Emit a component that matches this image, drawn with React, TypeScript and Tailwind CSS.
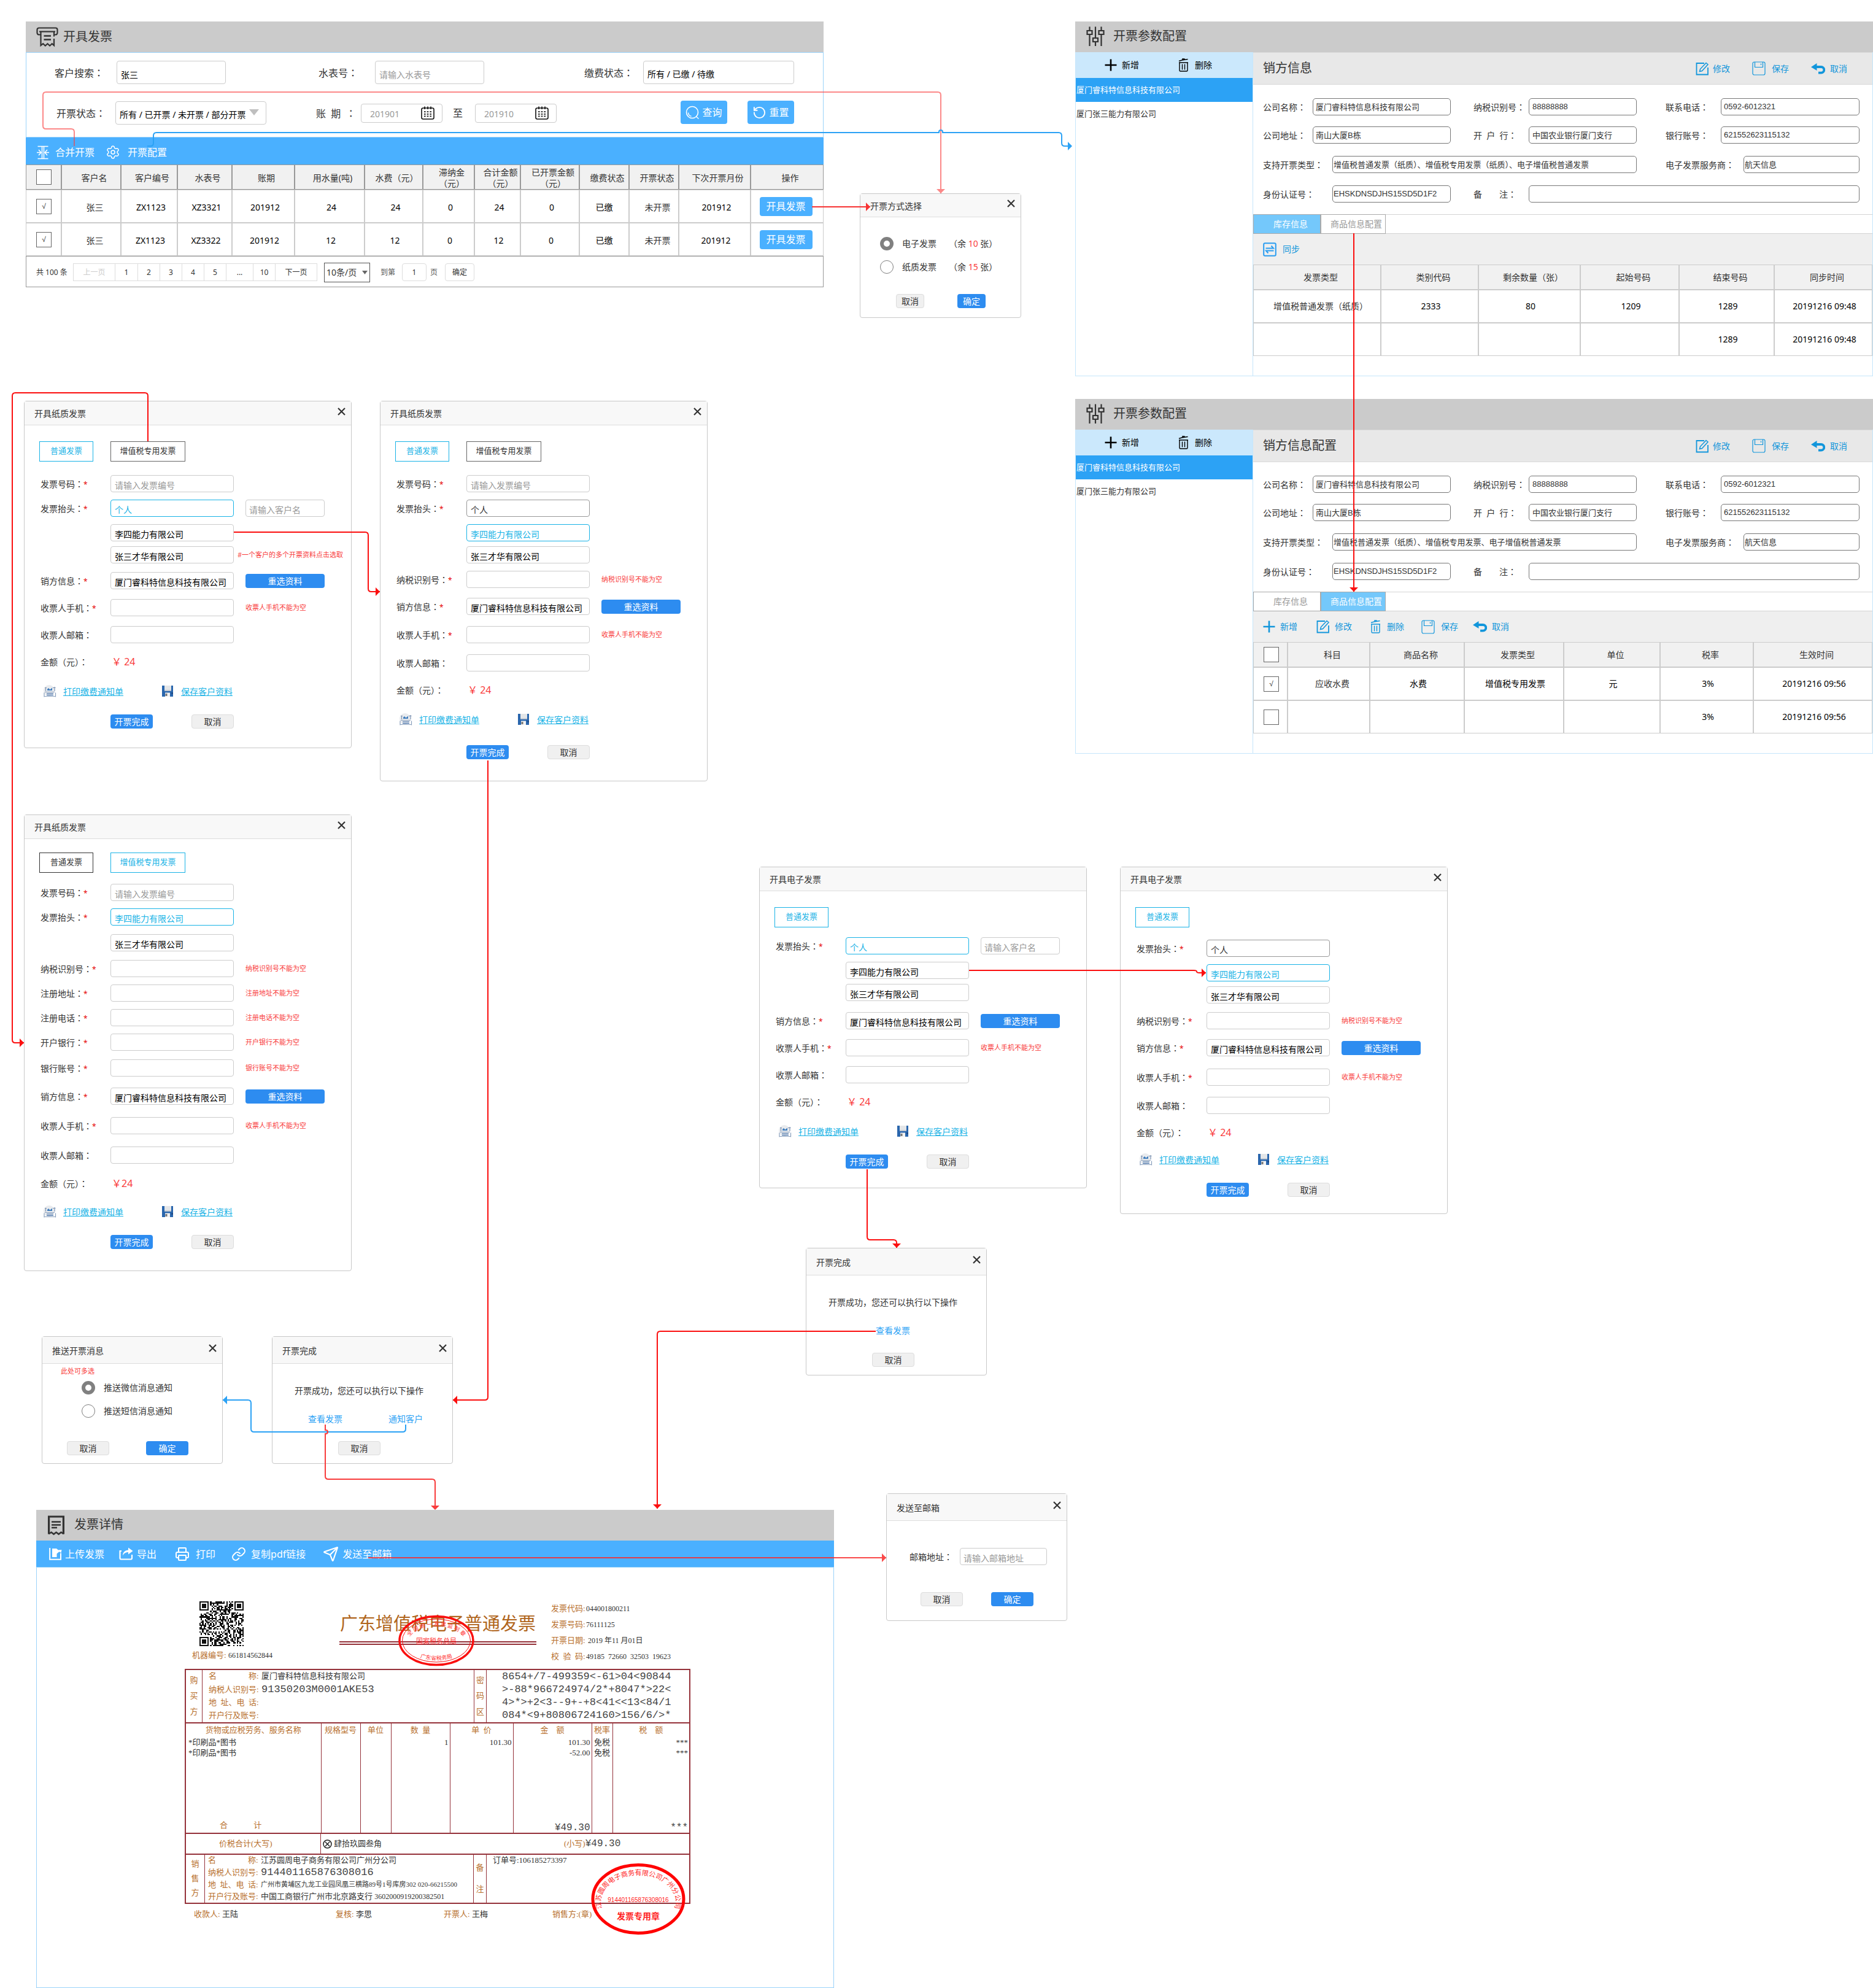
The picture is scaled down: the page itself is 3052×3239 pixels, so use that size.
import { useId } from "react";
import type { ReactNode } from "react";
import { Link, Printer, RotateCcw, Send, Settings } from "lucide-react";

/* ---------- icons ---------- */

function ReceiptPrinterIcon() {
  return (
    <svg width="36" height="33" viewBox="0 0 36 33" fill="none" stroke="#333" strokeWidth="2.2" aria-hidden="true">
      <path d="M7 12.500H4.500A3 3 0 0 1 1.500 9.500V4.500A3 3 0 0 1 4.500 1.500H31.500A3 3 0 0 1 34.500 4.500V9.500A3 3 0 0 1 31.500 12.500H29" />
      <path d="M5 7.500H31" />
      <path d="M7.500 7.500V30l3.700-2.800 3.600 3.300 3.700-3.300 3.600 3.300 3.700-3.300L29 30V19M29 15.500V7.500" />
      <path d="M12.500 14.500H24M12.500 20.500H24" strokeWidth="2.400" />
    </svg>
  );
}

function SlidersIcon() {
  return (
    <svg width="30" height="32" viewBox="0 0 30 32" fill="none" stroke="#333" strokeWidth="2.200" aria-hidden="true">
      <path d="M5.500 0.500V7M5.500 13V32M15 0.500V19M15 25V32M24.500 0.500V7M24.500 13V32" />
      <path d="M1.500 7h8v6h-8zM11 19h8v6h-8zM20.500 7h8v6h-8z" />
    </svg>
  );
}

function ReceiptIcon() {
  return (
    <svg width="27" height="33" viewBox="0 0 27 33" fill="none" stroke="#333" strokeWidth="3.200" aria-hidden="true">
      <path d="M1.600 30.500V2h23.800v28.500" />
      <path d="M1.600 30l4-2.500 4 3 4-3 4 3 4-3 4 2.500" strokeWidth="2.600" />
      <path d="M6 10.500h15M6 15.500h15M6 20h9" strokeWidth="2.600" />
    </svg>
  );
}

function MergeIcon() {
  return (
    <svg width="20" height="27" viewBox="0 0 20 27" fill="none" stroke="#fff" strokeWidth="1.500" aria-hidden="true">
      <path d="M1.500 3.500H18.500M1.500 23.500H18.500M8.500 3.500V23.500M11.500 3.500V23.500" />
      <path d="M0 13.500H6.500M3 9l4 4.500-4 4.500M20 13.500h-6.500M17 9l-4 4.500 4 4.500" />
    </svg>
  );
}

function SearchIcon() {
  return (
    <svg width="23" height="23" viewBox="0 0 23 23" fill="none" stroke="#fff" strokeWidth="1.600" aria-hidden="true">
      <circle cx="11" cy="11" r="9.500" />
      <path d="M17.500 18l4 3.500M4.500 11.500a6.500 6.500 0 0 0 5 6" strokeWidth="1.400" />
    </svg>
  );
}

function CalendarIcon() {
  return (
    <svg width="22" height="22" viewBox="0 0 22 22" fill="none" stroke="#111" strokeWidth="1.600" aria-hidden="true">
      <rect x="1" y="3" width="20" height="18" rx="2.500" />
      <path d="M6 0.500V5M11 0.500V5M16 0.500V5" />
      <path d="M5 9.200h12M5 12.800h12M5 16.400h12" strokeWidth="1.700" strokeDasharray="2.600 2.100" />
    </svg>
  );
}

function PlusIcon() {
  return (
    <svg width="20" height="20" viewBox="0 0 20 20" fill="none" stroke="currentColor" strokeWidth="2.600" aria-hidden="true">
      <path d="M10 0.500V19.500M0.500 10H19.500" />
    </svg>
  );
}

function TrashIcon() {
  return (
    <svg width="17" height="22" viewBox="0 0 17 22" fill="none" stroke="currentColor" strokeWidth="1.400" aria-hidden="true">
      <path d="M1 4.500l5-1.500 9.500-1.500M7 2.700V1h3.500" strokeWidth="1.600" />
      <path d="M2 7h13v12.500a1.500 1.500 0 0 1-1.500 1.500h-10A1.500 1.500 0 0 1 2 19.500zM6.500 9.500V18.500M10.500 9.500V18.500M1 7h15" />
    </svg>
  );
}

function EditIcon() {
  return (
    <svg width="22" height="22" viewBox="0 0 22 22" fill="none" stroke="currentColor" strokeWidth="1.800" aria-hidden="true">
      <path d="M14 2H1.500V20.500H20V9" />
      <path d="M6.500 15.500l1-4L17 1.500l3 2.500-9.500 10.500z" strokeWidth="1.500" />
    </svg>
  );
}

function SaveIcon() {
  return (
    <svg width="22" height="23" viewBox="0 0 22 23" fill="none" stroke="currentColor" strokeWidth="1.200" aria-hidden="true">
      <rect x="1" y="1" width="20" height="21" rx="2.500" />
      <path d="M4.500 1V9.500H17.500V1M14.500 3.500V6" />
    </svg>
  );
}

function UndoIcon() {
  return (
    <svg width="23" height="18" viewBox="0 0 23 18" aria-hidden="true">
      <path d="M0 6.200L9.500 0V12z" fill="currentColor" />
      <path d="M8 6h8.500a4.800 4.800 0 0 1 0 9.600H12" fill="none" stroke="currentColor" strokeWidth="3.800" />
    </svg>
  );
}

function SyncIcon() {
  return (
    <svg width="22" height="23" viewBox="0 0 22 23" fill="none" stroke="#2b9df0" strokeWidth="2" aria-hidden="true">
      <rect x="1.200" y="1.200" width="19.600" height="20.600" rx="2" />
      <path d="M4.500 9.500H17L13.500 5.500M17.500 13.500H5l3.500 4" />
    </svg>
  );
}

function UploadIcon() {
  return (
    <svg width="21" height="21" viewBox="0 0 21 21" aria-hidden="true">
      <path d="M1.200 1V19.800H19V9.500" fill="none" stroke="#fff" strokeWidth="2" />
      <path d="M5 2h7l3 2.500 5.500-.5-1 5-3-2-4 3.500V16H5z" fill="#fff" />
    </svg>
  );
}

function ExportIcon() {
  return (
    <svg width="23" height="21" viewBox="0 0 23 21" aria-hidden="true">
      <path d="M4 6H1.500V17.500a2 2 0 0 0 2 2H19a2 2 0 0 0 2-2V12" fill="none" stroke="#fff" strokeWidth="2.200" />
      <path d="M6 13.500C6 8 10 4.500 15 4.500V0.500L22.500 6 15 11.500V8C11 8 8 9.500 6 13.500z" fill="#fff" />
    </svg>
  );
}

function NoticeIcon() {
  return (
    <svg width="22" height="20" viewBox="0 0 22 20" fill="none" aria-hidden="true">
      <circle cx="10" cy="9" r="9" fill="#e9ebee" />
      <path d="M3 4.500h3M16 4.500h4.500M4.500 10V4.500M19 10V3" stroke="#7f94b3" strokeWidth="1.200" />
      <path d="M7 9V7l2-2 2.500 2.500L15 4.500V9z" fill="#3f7dbd" />
      <path d="M3 11.500h16M2 18.500h18.500M2 12.500v7M20.500 12.500v7" stroke="#8aa0bd" strokeWidth="1.200" />
      <path d="M6 14h11M6 16.500h11" stroke="#2a5c9c" strokeWidth="1.200" />
    </svg>
  );
}

function FloppyIcon() {
  return (
    <svg width="18" height="18" viewBox="0 0 18 18" aria-hidden="true">
      <path d="M0 0h18v18H0z" fill="#2a66ad" />
      <path d="M4 0h11v8H4z" fill="#e4e6e8" />
      <path d="M4 7h11v2H4z" fill="#c4cad2" />
      <path d="M5 11.500h8V18H5z" fill="#f2f2f2" />
      <path d="M5.500 13h3v4h-3z" fill="#777" />
      <path d="M15.500 11h2.500v3h-2.500z" fill="#1d4a86" />
    </svg>
  );
}

function CloseIcon() {
  return (
    <svg width="13" height="13" viewBox="0 0 13 13" fill="none" stroke="#333" strokeWidth="2.200" aria-hidden="true">
      <path d="M1 1l11 11M12 1L1 12" />
    </svg>
  );
}

/* ---------- shared pieces ---------- */

/* The Japanese face centres the full-width colon in its cell. */
function Caption({ text }: { text: string }) {
  return (
    <>
      {text.replace("：", "")}
      <span className="font-['Noto_Sans_CJK_JP',sans-serif]">：</span>
    </>
  );
}

function Dialog({
  place,
  title,
  head = "h-11",
  closable = true,
  children,
}: {
  place: string;
  title: string;
  head?: string;
  closable?: boolean;
  children: ReactNode;
}) {
  return (
    <section className={"absolute rounded-sm border border-[#c8c8c8] bg-white " + place}>
      <header
        className={
          "flex items-center justify-between border-b border-[#dddddd] bg-[#f8f8f8] pr-[9px] pl-4 " + head
        }
      >
        <h2 className="pt-0.5">{title}</h2>
        {closable && (
          <button type="button" aria-label="关闭" className="pb-1.5">
            <CloseIcon />
          </button>
        )}
      </header>
      {children}
    </section>
  );
}

function CancelButton({ size = "w-[69px] h-[23px]" }: { size?: string }) {
  return (
    <button type="button" className={"rounded-sm border border-[#dddddd] bg-[#f0f0f0] leading-5 " + size}>
      取消
    </button>
  );
}

function PrimaryButton({ children, size = "w-[69px] h-[23px]" }: { children: ReactNode; size?: string }) {
  return (
    <button type="button" className={"rounded-sm bg-[#2d8cf0] leading-5 text-white " + size}>
      {children}
    </button>
  );
}

function CheckBox({ checked = false, label }: { checked?: boolean; label: string }) {
  return (
    <label className="grid size-[25px] place-items-center">
      <input
        type="checkbox"
        defaultChecked={checked}
        aria-label={label}
        className="col-start-1 row-start-1 size-[25px] appearance-none border border-[#666666] bg-white"
      />
      {checked && (
        <span className="col-start-1 row-start-1 font-['Liberation_Sans',sans-serif] text-xs text-[#333333]">√</span>
      )}
    </label>
  );
}

function RadioOption({
  name,
  checked = false,
  children,
}: {
  name: string;
  checked?: boolean;
  children: ReactNode;
}) {
  return (
    <label className="flex h-[38px] items-center">
      <input
        type="radio"
        name={name}
        defaultChecked={checked}
        className="mr-3.5 size-[22px] appearance-none rounded-full border border-[#808080] bg-white checked:border-[6px]"
      />
      {children}
    </label>
  );
}

/* ---------- invoice issuing window ---------- */

const issueCols = [
  "w-[58px]", "w-[97px]", "w-[92px]", "w-[89px]", "w-[102px]", "w-[114px]", "w-[95px]",
  "w-[84px]", "w-[75px]", "w-[96px]", "w-[81px]", "w-[81px]", "w-[117px]", "w-[119px]",
];

const issueHeads = [
  "客户名", "客户编号", "水表号", "账期", "用水量(吨)", "水费（元）", "滞纳金（元）",
  "合计金额（元）", "已开票金额（元）", "缴费状态", "开票状态", "下次开票月份", "操作",
];

const issueRows = [
  ["张三", "ZX1123", "XZ3321", "201912", "24", "24", "0", "24", "0", "已缴", "未开票", "201912"],
  ["张三", "ZX1123", "XZ3322", "201912", "12", "12", "0", "12", "0", "已缴", "未开票", "201912"],
];

const pages = [
  { t: "上一页", c: "w-[68px] text-[#cccccc]" },
  { t: "1", c: "w-[37px]" },
  { t: "2", c: "w-9" },
  { t: "3", c: "w-9" },
  { t: "4", c: "w-9" },
  { t: "5", c: "w-9" },
  { t: "...", c: "w-11" },
  { t: "10", c: "w-9" },
  { t: "下一页", c: "w-[67px]" },
];

function MonthField({ label, value }: { label: string; value: string }) {
  return (
    <div className="flex h-[31px] w-[133px] items-center rounded-sm border border-[#cccccc] pr-3 pl-3.5">
      <input aria-label={label} defaultValue={value} className="w-full min-w-0 flex-1 pt-1 text-[#999999] outline-none" />
      <CalendarIcon />
    </div>
  );
}

function IssueWindow() {
  const id = useId();
  return (
    <section className="absolute top-[35px] left-[42px] w-[1300px]">
      <header className="flex h-[50px] items-center gap-2 bg-[#cbcbcb] pl-[17px]">
        <ReceiptPrinterIcon />
        <h1 className="text-xl">开具发票</h1>
      </header>
      <form className="h-[139px] border border-[#9bd3fa] pt-[13px] pr-[47px]">
        <div className="flex h-[38px] items-center pl-[46px]">
          <label htmlFor={id + "c"} className="w-[101px] text-base"><Caption text="客户搜索：" /></label>
          <input id={id + "c"} defaultValue="张三" className="h-[38px] w-[178px] rounded-sm border border-[#cccccc] pt-1.5 pl-1.5 text-black" />
          <label htmlFor={id + "m"} className="ml-[151px] w-[92px] text-base"><Caption text="水表号：" /></label>
          <input id={id + "m"} placeholder="请输入水表号" className="h-[38px] w-[178px] rounded-sm border border-[#cccccc] pt-1.5 pl-1.5 placeholder:text-[#999999]" />
          <label htmlFor={id + "p"} className="ml-[163px] w-24 text-base"><Caption text="缴费状态：" /></label>
          <select id={id + "p"} className="h-[38px] flex-1 appearance-none rounded-sm border border-[#cccccc] pt-1.5 pl-1.5 text-black">
            <option>所有 / 已缴 / 待缴</option>
          </select>
        </div>
        <div className="mt-[27px] flex h-10 items-center pl-[49px]">
          <label htmlFor={id + "s"} className="w-24 text-base"><Caption text="开票状态：" /></label>
          <div className="relative">
            <select id={id + "s"} className="h-[38px] w-[246px] appearance-none rounded-sm border border-[#cccccc] pt-1.5 pl-1.5 text-black">
              <option>所有 / 已开票 / 未开票 / 部分开票</option>
            </select>
            <svg width="16" height="10" viewBox="0 0 16 10" className="pointer-events-none absolute top-[13px] right-3" aria-hidden="true">
              <path d="M0 0h16L8 10z" fill="#bfbfbf" />
            </svg>
          </div>
          <span className="ml-[81px] w-[73px] text-base whitespace-pre"><Caption text="账  期  ：" /></span>
          <MonthField label="账期起" value="201901" />
          <span className="ml-[17px] w-9 text-base">至</span>
          <MonthField label="账期止" value="201910" />
          <button type="button" className="mb-0.5 ml-auto flex h-[38px] w-[76px] items-center justify-center gap-1 rounded-sm bg-[#4ab0ff] text-base text-white">
            <SearchIcon />
            查询
          </button>
          <button type="button" className="mb-0.5 ml-[33px] flex h-[38px] w-[76px] items-center justify-center gap-1 rounded-sm bg-[#4ab0ff] text-base text-white">
            <RotateCcw size={23} strokeWidth={2} />
            重置
          </button>
        </div>
      </form>
      <div className="flex h-11 items-center bg-[#4ab0ff] pt-1 pl-[18px] text-base text-white">
        <button type="button" className="flex items-center gap-2.5">
          <MergeIcon />
          合并开票
        </button>
        <button type="button" className="ml-[18px] flex items-center gap-3">
          <Settings size={24} strokeWidth={1.5} />
          开票配置
        </button>
      </div>
      <table className="w-full table-fixed border-separate border-spacing-0 text-center">
        <colgroup>
          {issueCols.map((c, i) => (
            <col key={i} className={c} />
          ))}
        </colgroup>
        <thead>
          <tr className="h-[41px] bg-[#f1f1f1]">
            <th className="border border-[#999999] pl-4">
              <CheckBox label="全选" />
            </th>
            {issueHeads.map((h) => (
              <th key={h} className="border border-[#999999] pt-0.5 pl-2.5 leading-[18px] font-normal">
                {h.length > 6 || h === "滞纳金（元）" ? (
                  <>
                    {h.replace("（元）", "")}
                    <br />
                    （元）
                  </>
                ) : (
                  h
                )}
              </th>
            ))}
          </tr>
        </thead>
        <tbody>
          {issueRows.map((row, r) => (
            <tr key={r} className="h-[54px]">
              <td className="border border-[#cccccc] pl-4">
                <CheckBox checked label={"选择第" + (r + 1) + "行"} />
              </td>
              {row.map((v, i) => (
                <td
                  key={i}
                  className={
                    "border border-[#cccccc] pt-1 " +
                    (i === 0 || i === 10 ? "pl-3" : i === 9 ? "text-black" : r === 0 ? "pl-1.5 text-black" : "pl-1 text-black")
                  }
                >
                  {v}
                </td>
              ))}
              <td className="border border-[#cccccc] pr-1">
                <button type="button" className="h-[31px] w-[86px] rounded-sm bg-[#4ab0ff] text-base text-white">
                  开具发票
                </button>
              </td>
            </tr>
          ))}
        </tbody>
      </table>
      <footer className="flex h-[51px] items-center border border-[#999999] pt-0.5 pl-4 text-xs">
        <span className="w-[60px]">共 100 条</span>
        <div className="flex h-[29px] divide-x divide-[#dddddd] border border-[#dddddd]">
          {pages.map((p) => (
            <button key={p.t} type="button" className={p.c}>
              {p.t}
            </button>
          ))}
        </div>
        <div className="relative ml-[11px]">
          <select aria-label="每页条数" className="h-8 w-[75px] appearance-none border border-[#555555] pl-[3px] text-sm">
            <option>10条/页</option>
          </select>
          <svg width="9" height="6" viewBox="0 0 9 6" className="pointer-events-none absolute top-[13px] right-1" aria-hidden="true">
            <path d="M0 0h9L4.500 6z" fill="#666" />
          </svg>
        </div>
        <label htmlFor={id + "g"} className="ml-[17px] w-[35px] text-[#555555]">到第</label>
        <input id={id + "g"} defaultValue="1" className="h-[29px] w-10 rounded-sm border border-[#dddddd] text-center" />
        <span className="ml-1.5 w-6 text-[#555555]">页</span>
        <button type="button" className="h-[29px] w-12 rounded-sm border border-[#dddddd]">确定</button>
      </footer>
    </section>
  );
}

/* ---------- configuration windows ---------- */

const stock = {
  cols: ["w-[208px]", "w-[159px]", "w-[166px]", "w-[161px]", "w-[155px]", "w-[160px]"],
  heads: ["发票类型", "类别代码", "剩余数量（张）", "起始号码", "结束号码", "同步时间"],
  rows: [
    ["增值税普通发票（纸质）", "2333", "80", "1209", "1289", "20191216 09:48"],
    ["", "", "", "", "1289", "20191216 09:48"],
  ],
};

const goods = {
  cols: ["w-14", "w-[134px]", "w-[154px]", "w-[162px]", "w-[157px]", "w-[152px]", "w-[194px]"],
  heads: ["科目", "商品名称", "发票类型", "单位", "税率", "生效时间"],
  rows: [
    ["应收水费", "水费", "增值税专用发票", "元", "3%", "20191216 09:56"],
    ["", "", "", "", "3%", "20191216 09:56"],
  ],
};

function Field({
  label,
  value = "",
  labelClass,
  inputClass,
}: {
  label: string;
  value?: string;
  labelClass: string;
  inputClass: string;
}) {
  const id = useId();
  return (
    <>
      <label htmlFor={id} className={"shrink-0 " + labelClass}><Caption text={label} /></label>
      <input
        id={id}
        defaultValue={value}
        className={
          "h-7 min-w-0 rounded-[5px] border border-[#777777] bg-transparent pb-0.5 font-['Liberation_Sans','Noto_Sans_CJK_SC',sans-serif] text-[13px] " +
          inputClass
        }
      />
    </>
  );
}

function ConfigWindow({
  place,
  heading,
  types,
  tab,
}: {
  place: string;
  heading: string;
  types: string;
  tab: "stock" | "goods";
}) {
  const isStock = tab === "stock";
  const data = isStock ? stock : goods;
  const on = "bg-[#74c8fb] text-white";
  const off = "bg-white text-[#999999]";
  return (
    <section className={"absolute right-0 left-[1752px] " + place}>
      <header className="flex h-[50px] items-center gap-[14px] bg-[#cbcbcb] pb-0.5 pl-[18px]">
        <SlidersIcon />
        <h1 className="text-xl">开票参数配置</h1>
      </header>
      <div className="flex h-[528px] border-x border-b border-[#c5e6fb]">
        <nav className="w-[289px] shrink-0 border-r border-[#c5e6fb] text-[13px]">
          <div className="flex h-[42px] items-center bg-[#cbe8fc] pl-[47px] text-sm text-black">
            <button type="button" className="flex items-center gap-2">
              <PlusIcon />
              新增
            </button>
            <button type="button" className="ml-16 flex items-center gap-2.5">
              <TrashIcon />
              删除
            </button>
          </div>
          <a href="#rk" className="flex h-[39px] items-center bg-[#2ca2f5] pl-px text-white">厦门睿科特信息科技有限公司</a>
          <a href="#zs" className="flex h-[39px] items-center pl-px">厦门张三能力有限公司</a>
        </nav>
        <div className="min-w-0 flex-1">
          <div className="flex h-[53px] items-center border-y border-[#d9d9d9] bg-[#e8e8e8] pr-[41px] pl-4">
            <h2 className="mr-auto pb-0.5 text-xl">{heading}</h2>
            <div className="flex items-center gap-9 text-[#1296db]">
              <button type="button" className="flex items-center gap-1.5"><EditIcon />修改</button>
              <button type="button" className="flex items-center gap-2.5"><SaveIcon />保存</button>
              <button type="button" className="flex items-center gap-2"><UndoIcon />取消</button>
            </div>
          </div>
          <form className="flex h-[211px] flex-col gap-[18px] pt-[22px] pr-[21px] pl-4">
            <div className="flex items-center">
              <Field label="公司名称：" value="厦门睿科特信息科技有限公司" labelClass="w-[81px]" inputClass="w-[225px] pl-1" />
              <Field label="纳税识别号：" value="88888888" labelClass="ml-[37px] w-[90px]" inputClass="w-[176px] pl-[5px]" />
              <Field label="联系电话：" value="0592-6012321" labelClass="ml-[47px] w-[90px]" inputClass="flex-1 pl-1" />
            </div>
            <div className="flex items-center">
              <Field label="公司地址：" value="南山大厦B栋" labelClass="w-[81px]" inputClass="w-[225px] pl-1" />
              <Field label="开  户  行：" value="中国农业银行厦门支行" labelClass="ml-[37px] w-[90px] whitespace-pre" inputClass="w-[176px] pl-[5px]" />
              <Field label="银行账号：" value="621552623115132" labelClass="ml-[47px] w-[90px]" inputClass="flex-1 pl-1" />
            </div>
            <div className="mt-0.5 flex items-center">
              <Field label="支持开票类型：" value={types} labelClass="w-[113px]" inputClass="w-[496px] pl-px" />
              <Field label="电子发票服务商：" value="航天信息" labelClass="ml-[47px] w-[127px]" inputClass="flex-1 pl-px" />
            </div>
            <div className="mt-0.5 flex items-center">
              <Field label="身份认证号：" value="EHSKDNSDJHS15SD5D1F2" labelClass="w-[113px]" inputClass="w-[193px] pl-px" />
              <Field label="备　　注：" labelClass="ml-[37px] w-[90px]" inputClass="flex-1 pl-1" />
            </div>
          </form>
          <div className="flex h-8 border-y border-[#d4d4d4]" role="tablist">
            <button type="button" role="tab" aria-selected={isStock} className={"-my-px w-[110px] border border-[#aaaaaa] pl-3 " + (isStock ? on : off)}>库存信息</button>
            <button type="button" role="tab" aria-selected={!isStock} className={"-my-px w-[106px] border border-[#aaaaaa] pl-2.5 " + (isStock ? off : on)}>商品信息配置</button>
          </div>
          <div className="flex h-[50px] items-center bg-[#efefef] pl-4 text-[#1296db]">
            {isStock ? (
              <button type="button" className="flex items-center gap-2.5"><SyncIcon />同步</button>
            ) : (
              <>
                <button type="button" className="flex items-center gap-2"><PlusIcon />新增</button>
                <button type="button" className="ml-[31px] flex items-center gap-2"><EditIcon />修改</button>
                <button type="button" className="ml-[30px] flex items-center gap-2.5"><TrashIcon />删除</button>
                <button type="button" className="ml-7 flex items-center gap-2.5"><SaveIcon />保存</button>
                <button type="button" className="ml-6 flex items-center gap-2"><UndoIcon />取消</button>
              </>
            )}
          </div>
          <table className="w-full table-fixed border-separate border-spacing-0 text-center">
            <colgroup>
              {data.cols.map((c, i) => (
                <col key={i} className={c} />
              ))}
            </colgroup>
            <thead>
              <tr className="h-[41px] bg-[#f1f1f1]">
                {!isStock && (
                  <th className="border border-[#cccccc] pl-4"><CheckBox label="全选" /></th>
                )}
                {data.heads.map((h) => (
                  <th key={h} className="border border-[#cccccc] pl-3 font-normal">{h}</th>
                ))}
              </tr>
            </thead>
            <tbody>
              {data.rows.map((row, r) => (
                <tr key={r} className="h-[54px]">
                  {!isStock && (
                    <td className="border border-[#cccccc] pl-4">
                      <CheckBox checked={r === 0} label={"选择第" + (r + 1) + "行"} />
                    </td>
                  )}
                  {row.map((v, i) => (
                    <td key={i} className={"border border-[#cccccc] " + (i === 0 ? "pl-3" : "pl-1 text-black")}>{v}</td>
                  ))}
                </tr>
              ))}
            </tbody>
          </table>
        </div>
      </div>
    </section>
  );
}

/* ---------- invoice form dialogs ---------- */

type FormRow = {
  label?: string;
  required?: boolean;
  gap: string;
  value?: string;
  placeholder?: string;
  tone?: "blue" | "dark";
  side?: "name" | "reselect";
  note?: string;
  noteGap?: string;
};

const SELLER = "厦门睿科特信息科技有限公司";

const plainRows: FormRow[] = [
  { label: "发票号码：", required: true, gap: "mt-[22px]", placeholder: "请输入发票编号" },
  { label: "发票抬头：", required: true, gap: "mt-3", value: "个人", tone: "blue", side: "name" },
  { gap: "mt-3", value: "李四能力有限公司" },
  { gap: "mt-2", value: "张三才华有限公司", note: "#一个客户的多个开票资料点击选取", noteGap: "ml-1.5" },
  { label: "销方信息：", required: true, gap: "mt-3.5", value: SELLER, side: "reselect" },
  { label: "收票人手机：", required: true, gap: "mt-4", note: "收票人手机不能为空" },
  { label: "收票人邮箱：", gap: "mt-4" },
];

const companyRows: FormRow[] = [
  { label: "发票号码：", required: true, gap: "mt-[22px]", placeholder: "请输入发票编号" },
  { label: "发票抬头：", required: true, gap: "mt-3", value: "个人", tone: "dark" },
  { gap: "mt-3", value: "李四能力有限公司", tone: "blue" },
  { gap: "mt-2", value: "张三才华有限公司" },
  { label: "纳税识别号：", required: true, gap: "mt-3", note: "纳税识别号不能为空" },
  { label: "销方信息：", required: true, gap: "mt-4", value: SELLER, side: "reselect" },
  { label: "收票人手机：", required: true, gap: "mt-[18px]", note: "收票人手机不能为空" },
  { label: "收票人邮箱：", gap: "mt-[18px]" },
];

const specialRows: FormRow[] = [
  { label: "发票号码：", required: true, gap: "mt-[18px]", placeholder: "请输入发票编号" },
  { label: "发票抬头：", required: true, gap: "mt-3", value: "李四能力有限公司", tone: "blue" },
  { gap: "mt-3.5", value: "张三才华有限公司" },
  { label: "纳税识别号：", required: true, gap: "mt-3.5", note: "纳税识别号不能为空" },
  { label: "注册地址：", required: true, gap: "mt-3", note: "注册地址不能为空" },
  { label: "注册电话：", required: true, gap: "mt-3", note: "注册电话不能为空" },
  { label: "开户银行：", required: true, gap: "mt-3", note: "开户银行不能为空" },
  { label: "银行账号：", required: true, gap: "mt-3.5", note: "银行账号不能为空" },
  { label: "销方信息：", required: true, gap: "mt-[18px]", value: SELLER, side: "reselect" },
  { label: "收票人手机：", required: true, gap: "mt-5", note: "收票人手机不能为空" },
  { label: "收票人邮箱：", gap: "mt-5" },
];

const electronicRows: FormRow[] = [
  { label: "发票抬头：", required: true, gap: "mt-4", value: "个人", tone: "blue", side: "name" },
  { gap: "mt-3", value: "李四能力有限公司" },
  { gap: "mt-2", value: "张三才华有限公司" },
  { label: "销方信息：", required: true, gap: "mt-[18px]", value: SELLER, side: "reselect" },
  { label: "收票人手机：", required: true, gap: "mt-4", note: "收票人手机不能为空" },
  { label: "收票人邮箱：", gap: "mt-4" },
];

const electronicCompanyRows: FormRow[] = [
  { label: "发票抬头：", required: true, gap: "mt-5", value: "个人", tone: "dark" },
  { gap: "mt-3", value: "李四能力有限公司", tone: "blue" },
  { gap: "mt-2", value: "张三才华有限公司" },
  { label: "纳税识别号：", required: true, gap: "mt-3.5", note: "纳税识别号不能为空" },
  { label: "销方信息：", required: true, gap: "mt-4", value: SELLER, side: "reselect" },
  { label: "收票人手机：", required: true, gap: "mt-5", note: "收票人手机不能为空" },
  { label: "收票人邮箱：", gap: "mt-[18px]" },
];

function FormLine({ row }: { row: FormRow }) {
  const id = useId();
  const tone =
    row.tone === "blue"
      ? "border-[#19b3e6] text-[#19b3e6]"
      : row.tone === "dark"
        ? "border-[#999999] text-[#333333]"
        : "border-[#cccccc] text-black";
  return (
    <div className={"flex h-7 items-center " + row.gap}>
      <label htmlFor={id} className="w-[114px] shrink-0">
        {row.label && <Caption text={row.label} />}
        {row.required && <span className="text-xs text-[#e60000]">*</span>}
      </label>
      <input
        id={id}
        aria-label={row.label ? undefined : "开票资料"}
        defaultValue={row.value}
        placeholder={row.placeholder}
        className={"h-7 w-[201px] rounded-sm border pt-1 pl-1.5 placeholder:text-[#999999] " + tone}
      />
      {row.side === "name" && (
        <input
          aria-label="客户名"
          placeholder="请输入客户名"
          className="ml-[19px] h-7 w-[129px] rounded-sm border border-[#cccccc] pt-1 pl-[5px] placeholder:text-[#999999]"
        />
      )}
      {row.side === "reselect" && (
        <button type="button" className="ml-[19px] h-[23px] w-[129px] rounded-sm bg-[#2d8cf0] pt-0.5 leading-5 text-white">
          重选资料
        </button>
      )}
      {row.note && (
        <span className={"text-[11px] text-[#f93b3b] " + (row.noteGap ?? "ml-[19px]")}>{row.note}</span>
      )}
    </div>
  );
}

function InvoiceFormDialog({
  place,
  title,
  closable,
  rows,
  tabs,
  tabGap = "mt-[26px]",
  amount = "￥ 24",
  amountGap = "mt-4",
  linkGap = "mt-6",
  buttonGap = "mt-7",
}: {
  place: string;
  title: string;
  closable?: boolean;
  rows: FormRow[];
  tabs: "plain" | "special" | "single";
  tabGap?: string;
  amount?: string;
  amountGap?: string;
  linkGap?: string;
  buttonGap?: string;
}) {
  const active = "border-[#19b3e6] text-[#19b3e6]";
  return (
    <Dialog place={"w-[534px] " + place} title={title} head="h-[39px]" closable={closable}>
      <form className="pl-[26px]">
        <div className={"-ml-0.5 flex gap-7 text-[13px] " + tabGap}>
          <button type="button" className={"h-[33px] w-[88px] border pb-0.5 " + (tabs === "special" ? "border-[#333333]" : active)}>
            普通发票
          </button>
          {tabs !== "single" && (
            <button type="button" className={"h-[33px] w-[122px] border pb-0.5 " + (tabs === "special" ? active : "border-[#666666]")}>
              增值税专用发票
            </button>
          )}
        </div>
        {rows.map((row, i) => (
          <FormLine key={i} row={row} />
        ))}
        <div className={"flex h-7 items-center " + amountGap}>
          <span className="w-[114px]"><Caption text="金额（元）：" /></span>
          <span className="pl-0.5 text-base text-[#f93b3b]">{amount}</span>
        </div>
        <div className={"flex h-5 items-center pl-1 text-[#19b3e6] underline " + linkGap}>
          <NoticeIcon />
          <a href="#print" className="mt-0.5 ml-[11px]">打印缴费通知单</a>
          <span className="ml-[63px]"><FloppyIcon /></span>
          <a href="#save" className="mt-0.5 ml-[13px]">保存客户资料</a>
        </div>
        <div className={"flex gap-[63px] pl-[114px] " + buttonGap}>
          <PrimaryButton>开票完成</PrimaryButton>
          <CancelButton />
        </div>
      </form>
    </Dialog>
  );
}

/* ---------- invoice detail window ---------- */

function qrPath() {
  const n = 33;
  let d = "";
  let seed = 20191;
  const inFinder = (x: number, y: number) =>
    (x < 8 && y < 8) || (x > n - 9 && y < 8) || (x < 8 && y > n - 9);
  for (let y = 0; y < n; y++) {
    for (let x = 0; x < n; x++) {
      seed = (seed * 1103515245 + 12345) % 2147483648;
      if (!inFinder(x, y) && (seed >> 12) % 2 === 0) d += `M${x} ${y}h1v1h-1z`;
    }
  }
  for (const [x, y] of [[0, 0], [n - 7, 0], [0, n - 7]]) {
    d += `M${x} ${y}h7v7h-7zM${x + 1} ${y + 1}v5h5v-5zM${x + 2} ${y + 2}h3v3h-3z`;
  }
  return d;
}

function QrCode() {
  return (
    <svg width="72" height="73" viewBox="0 0 33 33" preserveAspectRatio="none" role="img" aria-label="二维码">
      <path d={qrPath()} fill="#111" shapeRendering="crispEdges" />
    </svg>
  );
}

function BureauSeal() {
  return (
    <svg width="126" height="84" viewBox="0 0 126 84" fill="none" className="absolute top-[77px] left-[347px]" role="img" aria-label="发票监制章">
      <defs>
        <path id="sealTop" d="M16 46A47 28 0 0 1 110 46" />
        <path id="sealBottom" d="M32 68Q63 80 94 68" />
      </defs>
      <ellipse cx="63" cy="42" rx="60" ry="39.500" stroke="#fa0f0f" strokeWidth="3.500" />
      <ellipse cx="63" cy="42" rx="55.500" ry="35" stroke="#fa0f0f" strokeWidth="1" />
      <g fill="#f33" fontSize="9" fontFamily="'Noto Sans CJK SC', sans-serif" textAnchor="middle">
        <text><textPath href="#sealTop" startOffset="50%">全 国 统 一 发 票 监 制 章</textPath></text>
        <text x="63" y="47" fontSize="11">国家税务总局</text>
        <text><textPath href="#sealBottom" startOffset="50%">广东省税务局</textPath></text>
      </g>
    </svg>
  );
}

function CompanySeal() {
  return (
    <svg width="154" height="118" viewBox="0 0 154 118" fill="none" className="absolute top-[481px] left-[662px]" role="img" aria-label="发票专用章">
      <defs>
        <path id="companyArc" d="M21 80A61 43 0 1 1 133 80" />
      </defs>
      <ellipse cx="77" cy="59" rx="74" ry="55.500" stroke="#f00" strokeWidth="5" />
      <g fill="#f22" textAnchor="middle">
        <text fontSize="11" fontFamily="'Noto Sans CJK SC', sans-serif"><textPath href="#companyArc" startOffset="50%">江苏圆周电子商务有限公司广州分公司</textPath></text>
        <text x="77" y="64" fontSize="10" fontFamily="'Liberation Sans', sans-serif">914401165876308016</text>
        <text x="77" y="92" fontSize="14" fontWeight="bold" fontFamily="'Noto Sans CJK SC', sans-serif">发票专用章</text>
      </g>
    </svg>
  );
}

const itemCols = ["w-[220px]", "w-16", "w-[50px]", "w-24", "w-[103px]", "w-32", "w-[34px]", "w-[125px]"];
const itemHeads = ["货物或应税劳务、服务名称", "规格型号", "单位", "数  量", "单  价", "金    额", "税率", "税    额"];
const itemRows = [
  ["*印刷品*图书", "", "", "1", "101.30", "101.30", "免税", "***"],
  ["*印刷品*图书", "", "", "", "", "-52.00", "免税", "***"],
];

function SideLabel({ children, width }: { children: string; width: string }) {
  return (
    <div className={"flex shrink-0 flex-col items-center justify-around border-r border-[#95323a] py-1 text-[#b8702e] " + width}>
      {children.split("").map((c) => (
        <span key={c}>{c}</span>
      ))}
    </div>
  );
}

function PartyLine({ label, value, mono }: { label: string; value?: string; mono?: boolean }) {
  return (
    <div className="flex h-5 items-center gap-1 whitespace-pre">
      <dt className="w-[82px] text-[#b8702e]">{label}</dt>
      <dd className={mono ? "font-['Liberation_Mono',monospace] text-[17px] text-[#444444]" : ""}>{value}</dd>
    </div>
  );
}

function InvoiceWindow() {
  return (
    <section className="absolute top-[2460px] left-[59px] flex h-[779px] w-[1300px] flex-col">
      <header className="flex h-[50px] shrink-0 items-center gap-4 bg-[#cbcbcb] pl-[19px]">
        <ReceiptIcon />
        <h1 className="pb-0.5 text-xl">发票详情</h1>
      </header>
      <div className="flex h-[43px] shrink-0 items-center bg-[#4ab0ff] pl-[21px] text-base text-white">
        <button type="button" className="flex items-center gap-[5px]"><UploadIcon />上传发票</button>
        <button type="button" className="ml-6 flex items-center gap-1.5"><ExportIcon />导出</button>
        <button type="button" className="ml-[30px] flex items-center gap-2.5"><Printer size={24} strokeWidth={2} />打印</button>
        <button type="button" className="ml-[26px] flex items-center gap-2"><Link size={24} strokeWidth={2} />复制pdf链接</button>
        <button type="button" className="ml-[28px] flex items-center gap-1.5"><Send size={26} strokeWidth={2} />发送至邮箱</button>
      </div>
      <div className="flex-1 border border-[#9bd3fa]">
        <article className="relative ml-[241px] w-[824px] font-['Liberation_Serif','Noto_Sans_CJK_SC',serif] text-[13px] text-[#333333]">
          <div className="flex h-[165px]">
            <div className="w-[252px] pt-[55px]">
              <div className="ml-6"><QrCode /></div>
              <p className="mt-1.5 ml-3"><span className="text-[#b8702e]">机器编号:</span> <span className="text-xs">661814562844</span></p>
            </div>
            <div className="w-[321px]">
              <h2 className="mt-[72px] text-center text-[29px] leading-10 whitespace-nowrap text-[#b0651c]">广东增值税电子普通发票</h2>
              <div className="mt-2 h-1.5 border-y-2 border-[#95323a]" />
            </div>
            <dl className="ml-6 pt-[54px] leading-[26px] whitespace-pre">
              {[
                ["发票代码:", "044001800211"],
                ["发票号码:", "76111125"],
                ["开票日期:", " 2019 年11 月01日"],
                ["校  验  码:", "49185  72660  32503  19623"],
              ].map(([k, v]) => (
                <div key={k} className="flex">
                  <dt className="w-[57px] text-[#b8702e]">{k}</dt>
                  <dd className="text-xs leading-[26px]">{v}</dd>
                </div>
              ))}
            </dl>
          </div>
          <div className="border-2 border-[#95323a]">
            <div className="flex h-[85px]">
              <SideLabel width="w-[27px]">购买方</SideLabel>
              <dl className="flex flex-1 flex-col justify-around pl-2.5">
                <PartyLine label="名　　　　称:" value="厦门睿科特信息科技有限公司" />
                <PartyLine label="纳税人识别号:" value="91350203M0001AKE53" mono />
                <PartyLine label="地  址、电  话:" />
                <PartyLine label="开户行及账号:" />
              </dl>
              <div className="flex border-l border-[#95323a]">
                <SideLabel width="w-5">密码区</SideLabel>
              </div>
              <div className="w-[330px] pl-[25px] font-['Liberation_Mono',monospace] text-[17px] leading-[21px] text-[#444444]">
                <p>8654+/7-499359&lt;-61&gt;04&lt;90844</p>
                <p>&gt;-88*966724974/2*+8047*&gt;22&lt;</p>
                <p>4&gt;*&gt;+2&lt;3--9+-+8&lt;41&lt;&lt;13&lt;84/1</p>
                <p>084*&lt;9+80806724160&gt;156/6/&gt;*</p>
              </div>
            </div>
            <table className="h-[182px] w-full table-fixed border-collapse border-y-2 border-[#95323a]">
              <colgroup>
                {itemCols.map((c, i) => (
                  <col key={i} className={c} />
                ))}
              </colgroup>
              <thead>
                <tr className="h-[22px] leading-[22px] text-[#b8702e]">
                  {itemHeads.map((h) => (
                    <th key={h} className="border-r border-[#95323a] font-normal whitespace-pre last:border-r-0">{h}</th>
                  ))}
                </tr>
              </thead>
              <tbody>
                {itemRows.map((row, r) => (
                  <tr key={r} className="h-[17px] leading-[17px]">
                    {row.map((v, i) => (
                      <td key={i} className={"border-r border-[#95323a] last:border-r-0 " + (i === 0 ? "pl-1" : i === 6 ? "text-center" : "pr-0.5 text-right")}>{v}</td>
                    ))}
                  </tr>
                ))}
                <tr className="align-bottom leading-4">
                  <td className="border-r border-[#95323a] pb-1 pl-[55px] whitespace-pre text-[#b8702e]">合　　　 计</td>
                  {["", "", "", "", "¥49.30", "", "***"].map((v, i) => (
                    <td key={i} className="border-r border-[#95323a] pr-0.5 text-right font-['Liberation_Mono',monospace] text-base leading-4 text-[#444444] last:border-r-0">{v}</td>
                  ))}
                </tr>
              </tbody>
            </table>
            <div className="flex h-8">
              <div className="flex w-[220px] items-center border-r border-[#95323a] pl-[54px] text-[#b8702e]">价税合计(大写)</div>
              <div className="flex flex-1 items-center pl-[3px]">
                <svg width="15" height="15" viewBox="0 0 15 15" fill="none" stroke="#222" strokeWidth="1.500" aria-hidden="true">
                  <circle cx="7.500" cy="7.500" r="6.500" />
                  <path d="M4 4l7 7M11 4l-7 7" />
                </svg>
                <span className="ml-[3px]">肆拾玖圆叁角</span>
                <span className="ml-[297px] text-[#b8702e]">(小写)</span>
                <span className="font-['Liberation_Mono',monospace] text-base text-[#444444]">¥49.30</span>
              </div>
            </div>
            <div className="flex h-20 border-t-2 border-[#95323a]">
              <SideLabel width="w-[31px]">销售方</SideLabel>
              <dl className="flex flex-1 flex-col justify-around pl-[5px]">
                <PartyLine label="名　　　　称:" value="江苏圆周电子商务有限公司广州分公司" />
                <PartyLine label="纳税人识别号:" value="914401165876308016" mono />
                <div className="flex h-5 items-center gap-1 whitespace-pre">
                  <dt className="w-[82px] text-[#b8702e]">地  址、电  话:</dt>
                  <dd className="text-[11px]">广州市黄埔区九龙工业园凤凰三横路89号1号库房302 020-66215500</dd>
                </div>
                <div className="flex h-5 items-center gap-1 whitespace-pre">
                  <dt className="w-[82px] text-[#b8702e]">开户行及账号:</dt>
                  <dd>中国工商银行广州市北京路支行 <span className="text-xs">3602000919200382501</span></dd>
                </div>
              </dl>
              <div className="flex border-l border-[#95323a]">
                <SideLabel width="w-[21px]">备注</SideLabel>
              </div>
              <p className="w-[330px] pl-2.5">订单号:106185273397</p>
            </div>
          </div>
          <div className="flex pt-2 pl-[15px]">
            <p className="w-[231px]"><span className="text-[#b8702e]">收款人: </span>王陆</p>
            <p className="w-[176px]"><span className="text-[#b8702e]">复核: </span>李思</p>
            <p className="w-[177px]"><span className="text-[#b8702e]">开票人: </span>王梅</p>
            <p className="text-[#b8702e]">销售方:(章)</p>
          </div>
          <BureauSeal />
          <CompanySeal />
        </article>
      </div>
    </section>
  );
}

/* ---------- flow connectors ---------- */

type Point = [number, number];

function roundedPath(points: Point[], r = 5) {
  let d = `M${points[0][0]} ${points[0][1]}`;
  for (let i = 1; i < points.length - 1; i++) {
    const [px, py] = points[i - 1];
    const [x, y] = points[i];
    const [nx, ny] = points[i + 1];
    const before = Math.min(r, Math.hypot(x - px, y - py) / 2);
    const after = Math.min(r, Math.hypot(nx - x, ny - y) / 2);
    d += `L${x + Math.sign(px - x) * before} ${y + Math.sign(py - y) * before}`;
    d += `Q${x} ${y} ${x + Math.sign(nx - x) * after} ${y + Math.sign(ny - y) * after}`;
  }
  const [lx, ly] = points[points.length - 1];
  return d + `L${lx} ${ly}`;
}

function headPath([x, y]: Point, dir: "right" | "left" | "down") {
  if (dir === "right") return `M${x} ${y}l-7-7v14z`;
  if (dir === "left") return `M${x} ${y}l7-7v14z`;
  return `M${x} ${y}l-7-7h14z`;
}

const flows: { points: Point[]; dir: "right" | "left" | "down"; color: string; opacity?: number }[] = [
  { points: [[121, 238], [121, 210], [70, 210], [70, 150], [1533, 150], [1533, 315]], dir: "down", color: "#fa4040", opacity: 0.62 },
  { points: [[1323, 337], [1418, 337]], dir: "right", color: "#f73434" },
  { points: [[2206, 380], [2206, 964]], dir: "down", color: "#fb0f0f" },
  { points: [[241, 719], [241, 640], [20, 640], [20, 1699], [39, 1699]], dir: "right", color: "#fb0f0f" },
  { points: [[381, 867], [600, 867], [600, 964], [619, 964]], dir: "right", color: "#fb0f0f" },
  { points: [[795, 1239], [795, 2281], [738, 2281]], dir: "left", color: "#fb0f0f" },
  { points: [[1579, 1581], [1950, 1581], [1950, 1585], [1965, 1585]], dir: "right", color: "#fb0f0f" },
  { points: [[1413, 1905], [1413, 2020], [1461, 2020], [1461, 2033]], dir: "down", color: "#fb0f0f" },
  { points: [[1427, 2169], [1071, 2169], [1071, 2458]], dir: "down", color: "#fb0f0f" },
  { points: [[661, 2321], [661, 2333], [409, 2333], [409, 2281], [363, 2281]], dir: "left", color: "#2ca2f5" },
  { points: [[600, 2538], [1444, 2538]], dir: "right", color: "#fa2a2a", opacity: 0.85 },
];

function Connectors() {
  return (
    <svg width="3052" height="3239" viewBox="0 0 3052 3239" fill="none" strokeWidth="2" className="pointer-events-none absolute top-0 left-0" aria-hidden="true">
      {flows.map((f, i) => (
        <g key={i} opacity={f.opacity ?? 1}>
          <path d={roundedPath(f.points)} stroke={f.color} />
          <path d={headPath(f.points[f.points.length - 1], f.dir)} fill={f.color} />
        </g>
      ))}
      <path d="M240 238h5q5 0 5-5v-12q0-5 5-5H1530v-1a3 3 0 0 1 6 0v1H1725q5 0 5 5v12q0 5 5 5h7" stroke="#2ca2f5" />
      <path d={headPath([1747, 238], "right")} fill="#2ca2f5" />
      <path d="M530 2321v9h1a3 3 0 0 1 0 6h-1v69q0 5 5 5H704q5 0 5 5V2456" stroke="#f83c3c" />
      <path d={headPath([709, 2460], "down")} fill="#f83c3c" />
    </svg>
  );
}

/* ---------- page ---------- */

export default function App() {
  return (
    <main className="relative min-h-[3239px] overflow-hidden bg-white font-['Noto_Sans','Noto_Sans_CJK_SC',sans-serif] text-sm text-[#333333]">
      <IssueWindow />

      <Dialog place="top-[315px] left-[1401px] h-[203px] w-[263px]" title="开票方式选择" head="h-[38px]">
        <form className="pt-6 pl-8">
          <RadioOption name="way" checked>
            电子发票
            <span className="ml-5">（余 <b className="font-normal text-[#f93b3b]">10</b> 张）</span>
          </RadioOption>
          <RadioOption name="way">
            纸质发票
            <span className="ml-5">（余 <b className="font-normal text-[#f93b3b]">15</b> 张）</span>
          </RadioOption>
          <div className="mt-[25px] flex gap-[54px] pl-[26px]">
            <CancelButton size="w-[46px] h-[23px]" />
            <PrimaryButton size="w-[46px] h-[23px]">确定</PrimaryButton>
          </div>
        </form>
      </Dialog>

      <ConfigWindow place="top-[35px]" heading="销方信息" types="增值税普通发票（纸质）、增值税专用发票（纸质）、电子增值税普通发票" tab="stock" />
      <ConfigWindow place="top-[650px]" heading="销方信息配置" types="增值税普通发票（纸质）、增值税专用发票、电子增值税普通发票" tab="goods" />

      <InvoiceFormDialog place="top-[653px] left-[39px] h-[566px]" title="开具纸质发票" rows={plainRows} tabs="plain" />
      <InvoiceFormDialog place="top-[653px] left-[619px] h-[620px]" title="开具纸质发票" rows={companyRows} tabs="plain" linkGap="mt-6" buttonGap="mt-8" />
      <InvoiceFormDialog place="top-[1327px] left-[39px] h-[744px]" title="开具纸质发票" rows={specialRows} tabs="special" tabGap="mt-[22px]" amount="￥24" amountGap="mt-[18px]" linkGap="mt-[22px]" />
      <InvoiceFormDialog place="top-[1412px] left-[1237px] h-[524px]" title="开具电子发票" closable={false} rows={electronicRows} tabs="single" />
      <InvoiceFormDialog place="top-[1412px] left-[1825px] h-[566px]" title="开具电子发票" rows={electronicCompanyRows} tabs="single" linkGap="mt-5" />

      <Dialog place="top-[2033px] left-[1313px] h-[208px] w-[295px]" title="开票完成">
        <p className="mt-[34px] pl-9">开票成功，您还可以执行以下操作</p>
        <a href="#view" className="mt-[26px] ml-[113px] block w-14 text-[#2ca2f5]">查看发票</a>
        <div className="mt-[26px] pl-[107px]">
          <CancelButton />
        </div>
      </Dialog>

      <Dialog place="top-[2177px] left-[68px] h-[208px] w-[295px]" title="推送开票消息">
        <form>
          <p className="h-5 pt-1 pl-[30px] text-[11px] text-[#f93b3b]">此处可多选</p>
          <div className="pl-16">
            <RadioOption name="push" checked>推送微信消息通知</RadioOption>
            <RadioOption name="push">推送短信消息通知</RadioOption>
          </div>
          <div className="mt-[30px] flex gap-[60px] pl-10">
            <CancelButton />
            <PrimaryButton>确定</PrimaryButton>
          </div>
        </form>
      </Dialog>

      <Dialog place="top-[2177px] left-[443px] h-[208px] w-[295px]" title="开票完成">
        <p className="mt-[34px] pl-9">开票成功，您还可以执行以下操作</p>
        <div className="mt-[26px] flex gap-[75px] pl-[58px] text-[#2ca2f5]">
          <a href="#view">查看发票</a>
          <a href="#notify">通知客户</a>
        </div>
        <div className="mt-[26px] pl-[107px]">
          <CancelButton />
        </div>
      </Dialog>

      <InvoiceWindow />

      <Dialog place="top-[2433px] left-[1444px] h-[208px] w-[295px]" title="发送至邮箱">
        <form>
          <div className="mt-11 flex items-center pl-[37px]">
            <label htmlFor="mail" className="w-[82px]"><Caption text="邮箱地址：" /></label>
            <input id="mail" placeholder="请输入邮箱地址" className="h-7 w-[142px] rounded-sm border border-[#cccccc] pt-1 pl-[5px] placeholder:text-[#999999]" />
          </div>
          <div className="mt-11 flex gap-[46px] pl-[55px]">
            <CancelButton />
            <PrimaryButton>确定</PrimaryButton>
          </div>
        </form>
      </Dialog>

      <Connectors />
    </main>
  );
}
